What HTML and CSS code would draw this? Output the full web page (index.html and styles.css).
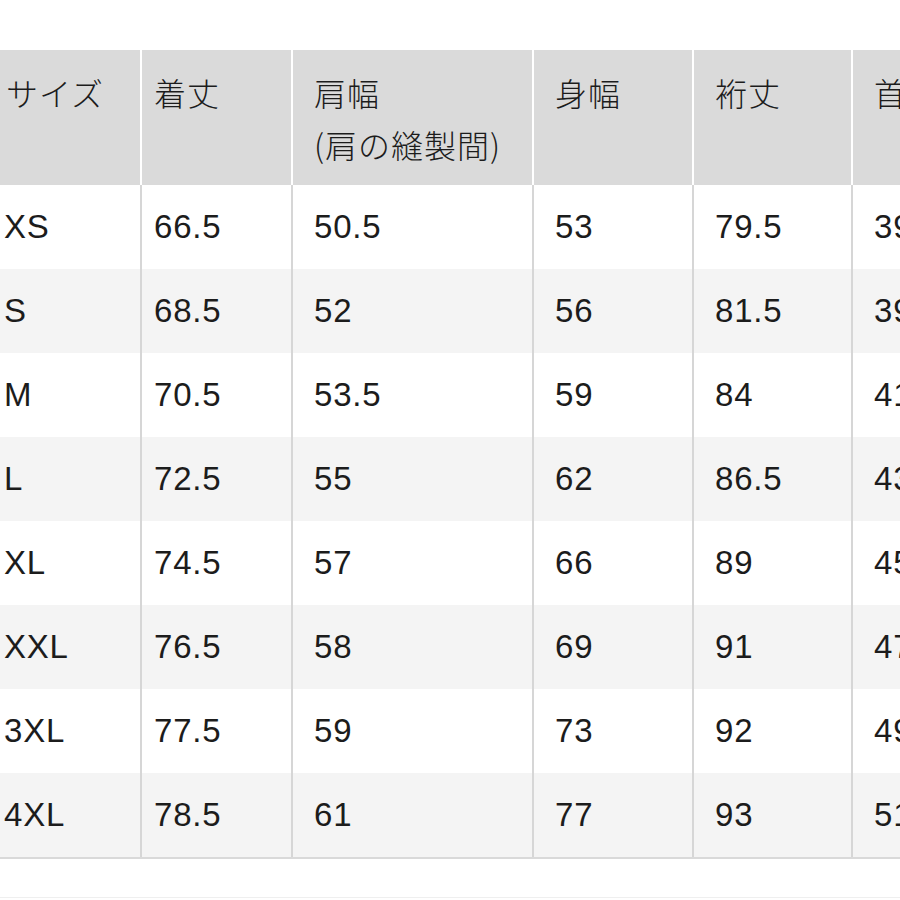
FILE: index.html
```html
<!DOCTYPE html>
<html lang="ja">
<head>
<meta charset="utf-8">
<title>サイズ表</title>
<link rel="stylesheet" href="styles.css">
</head>
<body>
<div class="page">
  <div class="table">
    <div class="row head">
      <div class="cell c1">サイズ</div>
      <div class="cell c2">着丈</div>
      <div class="cell c3">肩幅<br>(肩の縫製間)</div>
      <div class="cell c4">身幅</div>
      <div class="cell c5">裄丈</div>
      <div class="cell c6">首回り</div>
    </div>
    <div class="row"><div class="cell c1">XS</div><div class="cell c2">66.5</div><div class="cell c3">50.5</div><div class="cell c4">53</div><div class="cell c5">79.5</div><div class="cell c6">39.5</div></div>
    <div class="row alt"><div class="cell c1">S</div><div class="cell c2">68.5</div><div class="cell c3">52</div><div class="cell c4">56</div><div class="cell c5">81.5</div><div class="cell c6">39.5</div></div>
    <div class="row"><div class="cell c1">M</div><div class="cell c2">70.5</div><div class="cell c3">53.5</div><div class="cell c4">59</div><div class="cell c5">84</div><div class="cell c6">41</div></div>
    <div class="row alt"><div class="cell c1">L</div><div class="cell c2">72.5</div><div class="cell c3">55</div><div class="cell c4">62</div><div class="cell c5">86.5</div><div class="cell c6">43</div></div>
    <div class="row"><div class="cell c1">XL</div><div class="cell c2">74.5</div><div class="cell c3">57</div><div class="cell c4">66</div><div class="cell c5">89</div><div class="cell c6">45</div></div>
    <div class="row alt"><div class="cell c1">XXL</div><div class="cell c2">76.5</div><div class="cell c3">58</div><div class="cell c4">69</div><div class="cell c5">91</div><div class="cell c6">47</div></div>
    <div class="row"><div class="cell c1">3XL</div><div class="cell c2">77.5</div><div class="cell c3">59</div><div class="cell c4">73</div><div class="cell c5">92</div><div class="cell c6">49</div></div>
    <div class="row alt last"><div class="cell c1">4XL</div><div class="cell c2">78.5</div><div class="cell c3">61</div><div class="cell c4">77</div><div class="cell c5">93</div><div class="cell c6">51</div></div>
  </div>
  <div class="foot"></div>
</div>
</body>
</html>
```

FILE: styles.css
```css
html, body {
  margin: 0;
  padding: 0;
  background: #ffffff;
  overflow: hidden;
}

.page {
  width: 1000px;
  padding-top: 50px;
  font-family: "Liberation Sans", "Noto Sans CJK JP", sans-serif;
  font-size: 33px;
  color: #1c1c1c;
}

.table {
  display: flex;
  flex-direction: column;
}

.row {
  display: grid;
  grid-template-columns: 142px 151px 241px 160px 159px 147px;
  height: 84px;
  background: #ffffff;
}

.row.alt {
  background: #f4f4f4;
}

.row.last {
  border-bottom: 2px solid #d9d9d9;
}

.cell {
  display: flex;
  align-items: center;
  padding-left: 21px;
  border-right: 2px solid #d6d6d6;
  white-space: nowrap;
  letter-spacing: 0.8px;
}

.cell.c1 { padding-left: 4px; }
.cell.c2 { padding-left: 12px; }
.cell.c6 { border-right: none; }

.row.head {
  height: 135px;
  background: #dadada;
}

.row.head .cell {
  display: block;
  padding-top: 16px;
  line-height: 52px;
  letter-spacing: 1px;
  border-right: 2px solid #ffffff;
  font-family: "Noto Sans CJK JP", "Liberation Sans", sans-serif;
  font-weight: 300;
  font-size: 32px;
}

.row.head .cell.c1 { padding-left: 6px; }
.row.head .cell.c6 { border-right: none; }

.foot {
  height: 38px;
  border-bottom: 1px solid #efefef;
}
```
